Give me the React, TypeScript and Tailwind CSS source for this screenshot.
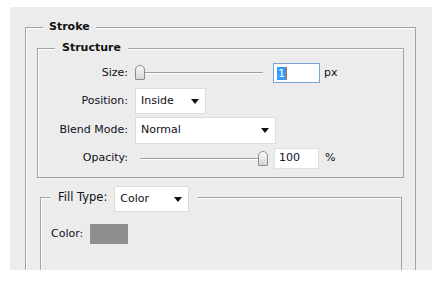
import type { ReactNode } from 'react'

const font = { fontFamily: '"DejaVu Sans", Verdana, sans-serif' }

function Thumb({ at }: { at: 'min' | 'max' }) {
  return (
    <div
      className={`absolute top-[-7px] w-[10px] h-[15px] rounded-t-[5px] rounded-b-[1px] border border-[#8d8d8d] bg-gradient-to-b from-[#fafafa] to-[#d6d6d6] ${
        at === 'min' ? 'left-0' : 'right-[2px]'
      }`}
    />
  )
}

function Slider({ at }: { at: 'min' | 'max' }) {
  return (
    <div className="relative w-[135px] h-[2px]">
      <div className="absolute left-[5px] right-[7px] top-0 h-[2px] border-t border-[#9c9c9c] border-b border-b-white" />
      <Thumb at={at} />
    </div>
  )
}

function Select({ value, width, height = 'h-[26px]' }: { value: string; width: string; height?: string }) {
  return (
    <div
      className={`${width} ${height} flex items-center justify-between pl-[5px] pr-[6px] bg-white border border-[#dcdcdc] text-[11px] text-[#101020]`}
    >
      <span>{value}</span>
      <svg width="8" height="5" viewBox="0 0 8 5">
        <path d="M0 0 H8 L4 5 Z" fill="#111" />
      </svg>
    </div>
  )
}

function Row({ label, children, className }: { label: string; children: ReactNode; className: string }) {
  return (
    <div className={`flex items-center ${className}`}>
      <div className="w-[90px] text-right text-[11px] text-[#101020]">{label}</div>
      <div className="ml-[7px] flex items-center">{children}</div>
    </div>
  )
}

export default function App() {
  return (
    <div className="w-[440px] h-[290px] bg-white pt-[7px] pl-[10px]" style={font}>
      <div className="w-[422px] h-[263px] bg-[#ececec] overflow-hidden pl-[15px] pt-[20px]">
        {/* Stroke */}
        <div className="w-[391px] h-[300px] border-l border-t border-r border-[#a2a2a2] shadow-[inset_1px_1px_0_#fff] pl-[11px]">
          <div className="-mt-[9px] h-[16px] flex items-center">
            <span className="ml-[6px] px-[6px] bg-[#ececec] font-bold text-[11px] text-[#111]">Stroke</span>
          </div>

          {/* Structure */}
          <div className="mt-[13px] w-[367px] h-[130px] border border-[#a2a2a2] shadow-[inset_1px_1px_0_#fff]">
            <div className="-mt-[9px] h-[16px] flex items-center">
              <span className="ml-[17px] px-[7px] bg-[#ececec] font-bold text-[11px] text-[#111]">Structure</span>
            </div>

            <Row label="Size:" className="mt-[7px] h-[20px]">
              <Slider at="min" />
              <div className="ml-[3px] w-[47px] h-[20px] bg-white border border-[#7ea4d4] flex items-center pl-[3px]">
                <span className="bg-[#3399ff] text-white text-[11px] leading-[13px] px-[1px]">1</span>
                <span className="w-px h-[13px] bg-[#c26a1c]" />
              </div>
              <span className="ml-[4px] text-[11px] text-[#101020]">px</span>
            </Row>

            <Row label="Position:" className="mt-[5px] h-[26px]">
              <Select value="Inside" width="w-[71px]" />
            </Row>

            <Row label="Blend Mode:" className="mt-[3px] h-[27px]">
              <Select value="Normal" width="w-[141px]" height="h-[27px]" />
            </Row>

            <Row label="Opacity:" className="mt-[4px] h-[21px]">
              <Slider at="max" />
              <div className="ml-[4px] w-[45px] h-[21px] bg-white border border-[#e0e0e0] flex items-center pl-[4px] text-[11px] text-[#101030]">
                100
              </div>
              <span className="ml-[6px] text-[11px] text-[#101020]">%</span>
            </Row>
          </div>

          {/* Fill Type */}
          <div className="ml-[3px] mt-[19px] w-[362px] h-[200px] border-l border-t border-r border-[#a2a2a2] shadow-[inset_1px_1px_0_#fff]">
            <div className="-mt-[12px] h-[26px] flex items-center">
              <div className="ml-[9px] pl-[8px] pr-[9px] bg-[#ececec] flex items-center gap-[7px]">
                <span className="text-[11.5px] text-[#101020] -mt-[3px]">Fill Type:</span>
                <Select value="Color" width="w-[75px]" />
              </div>
            </div>
            <div className="mt-[12px] pl-[10px] flex items-center gap-[7px]">
              <span className="text-[11px] text-[#101020]">Color:</span>
              <div className="w-[38px] h-[20px] bg-[#8e8e8e]" />
            </div>
          </div>
        </div>
      </div>
    </div>
  )
}
